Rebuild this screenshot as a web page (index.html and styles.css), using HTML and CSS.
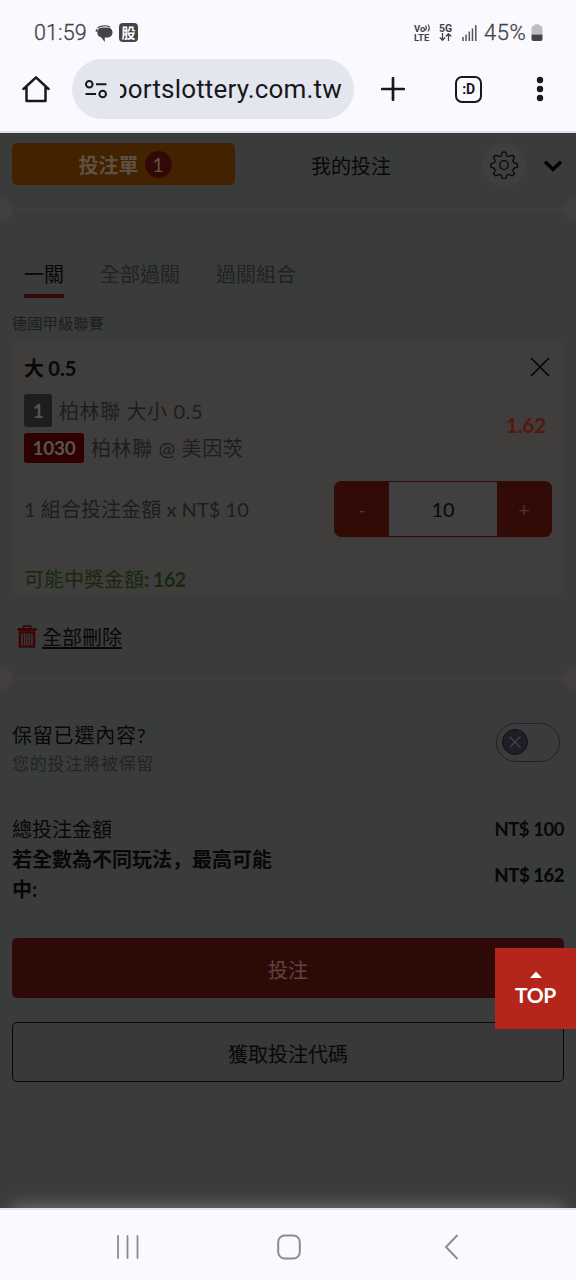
FILE: index.html
```html
<!DOCTYPE html>
<html lang="zh-Hant">
<head>
<meta charset="utf-8">
<title>投注單</title>
<link rel="stylesheet" href="styles.css">
</head>
<body>
<div class="phone">
  <header class="status">
    <span class="time">01:59</span>
    <svg class="chat" width="18" height="18" viewBox="0 0 18 18"><path d="M2.500 3.200Q4.500.8 8.500.8 12.500.6 15 2" fill="none" stroke="#444" stroke-width="1.200"/><path d="M.5 6.500Q.6 4.500 2.200 3.600L2.800 7Z" fill="#444"/><path d="M7.500 2.500h4.500a5 5 0 0 1 1 10H9.800V17L6 12.300A5 5 0 0 1 7.500 2.500Z" fill="#444"/></svg>
    <span class="stock">股</span>
    <span class="spacer"></span>
    <span class="volte"><span>Vo<svg width="6" height="8" viewBox="0 0 6 8"><path d="M.5 1.500Q2 4 .5 6.500M3 .5Q5.500 4 3 7.500" fill="none" stroke="#444" stroke-width="1.200"/></svg></span><span>LTE</span></span>
    <span class="fiveg"><span>5G</span><svg width="13" height="8" viewBox="0 0 13 8"><path d="M3.500 0V7M.8 4.500 3.500 7.200 6.200 4.500M9.500 8V1M6.800 3.500 9.500.8 12.200 3.500" fill="none" stroke="#444" stroke-width="1.300"/></svg></span>
    <svg class="signal" width="15" height="16" viewBox="0 0 15 16"><path d="M1 12V16M4 9.500V16M7.300 6.500V16M10.500 3.500V16M13.800 0V16" stroke="#555" stroke-width="1.500"/></svg>
    <span class="percent">45%</span>
    <svg class="battery" width="12" height="18" viewBox="0 0 12 18"><path d="M3.500 1.500Q3.500.3 5 .3H7Q8.500.3 8.500 1.500 11.500 1.500 11.500 4.500V10.500H.5V4.500Q.5 1.500 3.500 1.500Z" fill="#bdbdbd"/><path d="M.5 10.500h11v4.500a2 2 0 0 1-2 2h-7a2 2 0 0 1-2-2Z" fill="#444"/></svg>
  </header>
  <nav class="toolbar">
    <svg class="home" width="28" height="28" viewBox="0 0 28 28"><path d="M1.500 14 14 2.300 26.500 14M4.500 12V26h19V12" fill="none" stroke="#17181c" stroke-width="2.500" stroke-linejoin="round" stroke-linecap="round"/></svg>
    <div class="address">
      <svg width="24" height="20" viewBox="0 0 24 20"><g fill="none" stroke="#17181c" stroke-width="2"><circle cx="5.300" cy="5.300" r="3.300"/><circle cx="18.700" cy="15" r="3.300"/><path d="M12 5.300h10.500M1.500 15H12"/></g></svg>
      <div class="url"><span>portslottery.com.tw</span></div>
    </div>
    <svg class="plus" width="24" height="24" viewBox="0 0 24 24"><path d="M12 1.200V22.800M1.200 12H22.800" stroke="#17181c" stroke-width="2.700" stroke-linecap="round"/></svg>
    <span class="tabcount">:D</span>
    <svg class="more" width="8" height="26" viewBox="0 0 8 26"><g fill="#17181c"><circle cx="4" cy="4" r="3.200"/><circle cx="4" cy="13" r="3.200"/><circle cx="4" cy="22" r="3.200"/></g></svg>
  </nav>

  <main class="slip">
    <div class="slip-head">
      <div class="slip-btn">投注單<span class="count">1</span></div>
      <div class="my-bets">我的投注</div>
      <div class="gear"><svg width="28" height="28" viewBox="0 0 28 28"><g fill="none" stroke="#090909" stroke-width="1.300" stroke-linejoin="round"><circle cx="14" cy="14" r="4.300"/><path d="M12.300 1.200h3.400l1.100 3.600 2.200.9 3.300-1.700 2.200 2.200-1.700 3.300.9 2.200 3.600 1.100v3.400l-3.600 1.100-.9 2.200 1.700 3.300-2.200 2.200-3.300-1.700-2.200.9-1.100 3.600h-3.400l-1.100-3.600-2.200-.9-3.300 1.700-2.200-2.200 1.700-3.300-.9-2.200L.9 16.200v-3.400l3.400-1.100.9-2.200L3.500 6.200 5.700 4 9 5.700l2.200-.9Z"/></g></svg></div>
      <svg class="chevron" width="20" height="14" viewBox="0 0 20 14"><path d="M2 2.800 10 10.500 18 2.800" fill="none" stroke="#020202" stroke-width="3.400"/></svg>
    </div>
    <div class="tear"></div>

    <div class="tabs"><span class="tab active">一關</span><span class="tab">全部過關</span><span class="tab">過關組合</span></div>
    <div class="league">德國甲級聯賽</div>

    <section class="card">
      <div class="card-title"><b>大 0.5</b><svg width="20" height="20" viewBox="0 0 20 20"><path d="M1 1 19 19M19 1 1 19" stroke="#060606" stroke-width="1.700"/></svg></div>
      <div class="match">
        <div class="match-lines">
          <div class="line"><span class="tag gray">1</span><span>柏林聯 大小 0.5</span></div>
          <div class="line second"><span class="tag red">1030</span><span>柏林聯 @ 美因茨</span></div>
        </div>
        <b class="odds">1.62</b>
      </div>
      <div class="stake"><span class="stake-label">1 組合投注金額 x NT$ 10</span><div class="stepper"><span class="step">-</span><span class="value">10</span><span class="step">+</span></div></div>
      <div class="win">可能中獎金額<b>: 162</b></div>
    </section>

    <div class="clear"><svg width="20" height="24" viewBox="0 0 20 24"><g fill="none" stroke="#3b0706"><path d="M.5 4.500h19" stroke-width="3"/><path d="M6.500 3.500V1.200h7V3.500" stroke-width="1.800"/><path d="M3 7.500V21.500h14V7.500Z" stroke-width="2.600"/><path d="M6.400 9V20M8.800 9V20M11.200 9V20M13.600 9V20" stroke-width="1.100"/></g></svg><span>全部刪除</span></div>
    <div class="tear"></div>

    <div class="keep">
      <div><div class="keep-title">保留已選內容?</div><div class="keep-sub">您的投注將被保留</div></div>
      <div class="toggle"><span class="knob"><svg width="12" height="12" viewBox="0 0 12 12"><path d="M.5.5 11.500 11.500M11.500.5.5 11.500" stroke="#45454c" stroke-width="1.100"/></svg></span></div>
    </div>

    <div class="total"><span>總投注金額</span><b>NT$ 100</b></div>
    <div class="total max"><span class="max-label">若全數為不同玩法<span class="comma" lang="zh-Hans">，</span>最高可能中:</span><b>NT$ 162</b></div>

    <div class="place">投注</div>
    <div class="code">獲取投注代碼</div>
    <div class="glow"></div>
    <div class="top"><svg width="12" height="7" viewBox="0 0 12 7"><path d="M0 7 6 .5 12 7Z" fill="#fff"/></svg><span>TOP</span></div>
  </main>

  <footer class="softkeys">
    <svg width="24" height="24" viewBox="0 0 24 24"><path d="M2 1V23M11.500 1V23M21.500 1V23" stroke="#8c8c8f" stroke-width="1.800" stroke-linecap="round"/></svg>
    <svg width="24" height="26" viewBox="0 0 24 26"><rect x="1.200" y="1.500" width="21.600" height="23" rx="6.500" fill="none" stroke="#8c8c8f" stroke-width="2"/></svg>
    <svg width="16" height="26" viewBox="0 0 16 26"><path d="M14 1.500 3 13 14 24.500" fill="none" stroke="#8c8c8f" stroke-width="1.900" stroke-linecap="round"/></svg>
  </footer>
</div>
</body>
</html>
```

FILE: styles.css
```css
* { box-sizing: border-box; }
body { margin: 0; background: #faf9ff; }
svg { display: block; flex: none; }
.phone { width: 576px; height: 1280px; display: flex; flex-direction: column; overflow: hidden; font-family: Lato, "Noto Sans CJK TC", sans-serif; }

.status { height: 59px; padding: 6px 33px 0 34px; display: flex; align-items: center; color: #444; font-family: Roboto, sans-serif; }
.time { width: 53px; font-size: 21.5px; font-weight: 300; letter-spacing: .1px; -webkit-text-stroke: .3px #444; }
.chat { margin: 2px 0 0 8px; }
.stock { width: 19px; height: 19px; margin-left: 6px; border-radius: 4px; background: #444; color: #fff; font: bold 14px/18px "Noto Sans CJK TC", sans-serif; text-align: center; }
.spacer { flex: 1; }
.volte, .fiveg { display: flex; flex-direction: column; font-weight: 700; font-size: 9.5px; line-height: 9px; }
.volte { width: 17px; margin-right: 8px; }
.volte > span { display: flex; align-items: center; }
.fiveg { width: 14px; margin-right: 9px; font-size: 10.5px; }
.signal { margin-right: 7px; }
.percent { width: 45px; font-size: 22px; font-weight: 300; letter-spacing: .6px; -webkit-text-stroke: .3px #444; }
.battery { margin: 0 0 0 2px; }

.toolbar { height: 74px; padding-bottom: 12px; border-bottom: 2px solid #e1e2e9; display: flex; align-items: center; }
.home { margin-left: 22px; }
.address { width: 282px; height: 60px; margin-left: 22px; padding-left: 12px; border-radius: 30px; background: #e3e6ef; display: flex; align-items: center; }
.url { width: 222px; height: 42px; margin-left: 12px; display: flex; justify-content: flex-end; overflow: hidden; font: 26px/42px Roboto, sans-serif; letter-spacing: .17px; color: #17181c; }
.plus { margin-left: 27px; }
.tabcount { width: 27px; height: 27px; margin-left: 50px; border: 2.5px solid #17181c; border-radius: 7px; font: bold 14px/22px Roboto, sans-serif; text-align: center; color: #17181c; letter-spacing: -.3px; }
.more { margin-left: 54px; }

.slip { position: relative; flex: 1; background: #3a3c3b; color: #080808; font-size: 20px; line-height: 30px; overflow: hidden; }
.slip-head { height: 64px; padding: 10px 0 0 12px; display: flex; align-items: flex-start; }
.slip-btn { width: 223px; height: 42px; padding: 1px 0 0 3px; border-radius: 5px; background: #432200; color: #5d5146; font-weight: 700; display: flex; align-items: center; justify-content: center; gap: 6px; }
.count { width: 27px; height: 27px; border-radius: 50%; background: #330908; color: #665250; font-size: 19px; line-height: 27px; font-weight: 400; text-align: center; }
.my-bets { width: 80px; margin: 8px 0 0 76px; white-space: nowrap; }
.gear { width: 44px; height: 44px; margin: 0 0 0 91px; border-radius: 50%; background: #403f3f; display: grid; place-items: center; }
.chevron { margin: 16px 0 0 17px; }
.tear { height: 26px; background: radial-gradient(circle at 0 50%, #433f3e 12px, transparent 12.5px), radial-gradient(circle at 100% 50%, #433f3e 12px, transparent 12.5px), repeating-linear-gradient(90deg, #433f3e 0 5px, transparent 5px 8px) 16px 12px / 548px 2px no-repeat; }

.tabs { height: 40px; margin: 35px 0 0 24px; display: flex; gap: 36px; color: #212222; }
.tabs .tab { padding-top: 1px; }
.tabs .active { border-bottom: 4px solid #350708; color: #060606; }
.league { height: 42px; padding: 10px 0 0 12px; font-size: 15.3px; color: #1c1e1d; }

.card { height: 257px; margin: 0 12px; padding: 0 12px; border-radius: 7px; background: #403e3c; }
.card-title { height: 54px; padding: 1px 2px 0 0; display: flex; align-items: center; justify-content: space-between; word-spacing: -.5px; }
.card-title svg { margin-top: -2px; }
.match { height: 69px; display: flex; justify-content: space-between; align-items: center; color: #1d1d1d; }
.line { height: 33px; display: flex; align-items: center; gap: 7px; letter-spacing: .6px; }
.line.second { height: 30px; margin-top: 6px; }
.tag { height: 100%; border-radius: 3px; color: #555; font-weight: 700; font-size: 19px; letter-spacing: -.3px; text-align: center; }
.gray { width: 28px; background: #1e1e1e; line-height: 33px; }
.red { width: 60px; background: #2e0000; }
.odds { padding: 0 6px 7px 0; color: #56160f; font-size: 21px; letter-spacing: -.3px; }
.stake { height: 56px; margin-top: 18px; display: flex; align-items: center; justify-content: space-between; color: #1d1d1d; }
.stake-label { letter-spacing: .06px; }
.stepper { width: 218px; height: 56px; display: flex; border: 1px solid #330b06; border-radius: 7px; overflow: hidden; background: #320b06; line-height: 54px; text-align: center; }
.step { width: 54px; color: #58302c; }
.value { flex: 1; background: #404040; color: #090909; }
.win { margin-top: 27px; color: #17280e; }
.win b { letter-spacing: -.65px; }

.clear { height: 68px; padding: 11px 0 0 17px; display: flex; align-items: center; gap: 5px; margin-top: -1px; height: 69px; }
.card + .clear { margin-top: 0; height: 68px; }
.clear span { height: 30px; line-height: 31px; text-decoration: underline; text-decoration-thickness: 1.5px; text-underline-offset: 2px; }

.keep { height: 86px; margin: 29px 16px 0 12px; display: flex; justify-content: space-between; }
.keep-title { letter-spacing: .8px; }
.keep-sub { font-size: 17px; letter-spacing: .8px; line-height: 28px; color: #222423; }
.toggle { width: 64px; height: 39px; margin-top: 3px; padding: 5px; border: 1px solid #202127; border-radius: 20px; }
.knob { width: 26px; height: 26px; border-radius: 50%; background: #1e1f26; border: 1px solid #11121b; display: grid; place-items: center; }

.total { padding: 0 12px; margin-top: 7px; display: flex; justify-content: space-between; align-items: center; }
.total > b { font-size: 18.5px; letter-spacing: -.45px; padding-top: 1px; }
.total.max { margin-top: 0; font-weight: 700; }
.max-label { width: 280px; }
.comma { font-family: "Noto Sans CJK SC", sans-serif; line-height: 1; }
.place, .code { height: 60px; margin: 34px 12px 0; border-radius: 5px; background: #2e0a06; color: #5c4542; display: flex; align-items: center; justify-content: center; padding-top: 3px; }
.code { margin-top: 24px; border: 1px solid #080808; background: #393939; color: #080808; }
.glow { position: absolute; left: 12px; right: 12px; bottom: -12px; height: 12px; box-shadow: 0 0 18px #888; }
.top { position: absolute; right: 0; top: 815px; width: 81px; height: 81px; background: #b4261b; color: #fff; display: flex; flex-direction: column; align-items: center; padding-top: 23px; font-size: 21px; font-weight: 700; line-height: 34px; letter-spacing: -.3px; }

.softkeys { height: 72px; border-top: 2px solid #e6e5ed; padding: 3px 117px 0 116px; display: flex; align-items: center; gap: 137px; }
.softkeys svg:last-child { margin-left: 5px; }
```
